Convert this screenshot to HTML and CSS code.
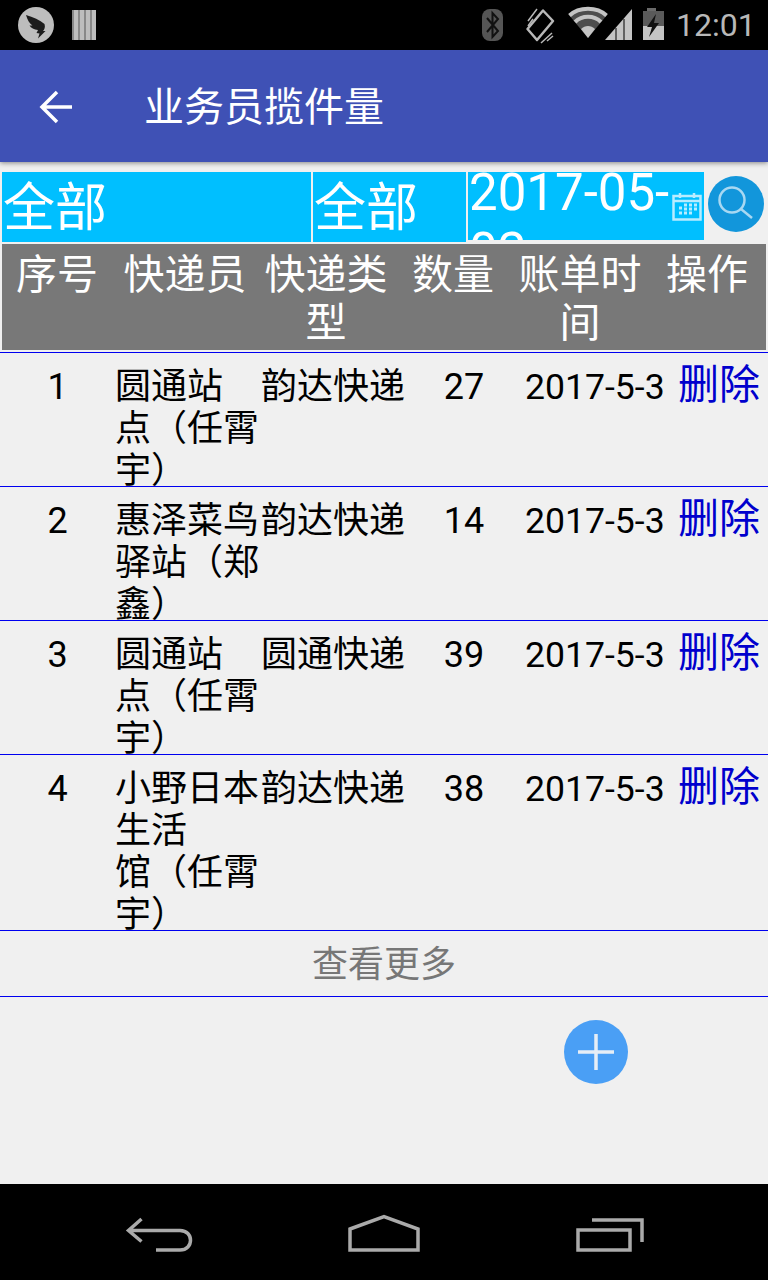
FILE: index.html
```html
<!DOCTYPE html>
<html lang="zh">
<head>
    <meta charset="UTF-8">
    <meta name="viewport" content="width=device-width, initial-scale=1.0">
    <title>业务员揽件量</title>
    <link rel="stylesheet" href="styles.css">
</head>
<body>

<div class="status-bar">
    <svg class="status-left" width="90" height="50" viewBox="0 0 90 50">
        <circle cx="26" cy="25" r="18" fill="#bdbdbd"/>
        <path d="M16 15 C23 17 30 20 34.500 24 C35.500 27 34.500 29.500 33 31 L35.500 31 L28 38.500 L29.500 33.500 L26.500 33 L28 30 C24 29.500 21 28 19.500 25.500 L22.500 25.500 C19.500 23.500 17.500 20 16 15 Z" fill="#1c1c1c"/>
        <rect x="62" y="10" width="24" height="30" fill="#bdbdbd"/>
        <path d="M63 10 V40 M69 10 V40 M75 10 V40 M81 10 V40" stroke="#777" stroke-width="1.500"/>
    </svg>
    <svg class="status-right" width="185" height="50" viewBox="0 0 185 50">
        <rect x="1" y="9" width="21" height="32" rx="8" fill="#555"/>
        <path d="M6 18 L17 31 L11.500 37 V13 L17 19 L6 32" fill="none" stroke="#111" stroke-width="2"/>
        <path d="M62 10.500 L72 21 L56 40 L46.500 29 Z" fill="none" stroke="#b8b8b8" stroke-width="2.500" stroke-linejoin="round"/>
        <path d="M47 21 L56 9 M47 26 L52 19 M60 43 L71 33 M66 41 L72 36" stroke="#b8b8b8" stroke-width="1.500" fill="none"/>
        <path d="M88 15 C97 6 115 6 126 15 L107 38 Z" fill="#4e4e4e"/>
        <path d="M88.500 15.500 C98 6.500 116 6.500 125.500 15.500" fill="none" stroke="#c4c4c4" stroke-width="4"/>
        <path d="M94 22 C101 15 113 15 120 22" fill="none" stroke="#c4c4c4" stroke-width="4"/>
        <path d="M100 29 L107 38 L114 29 C110 25 104 25 100 29 Z" fill="#c4c4c4"/>
        <path d="M124 40 L151 9 V40 Z" fill="#c4c4c4"/>
        <path d="M135 40 V28 M143 40 V19" stroke="#000" stroke-width="1"/>
        <rect x="166" y="8" width="9" height="3" fill="#6a6a6a"/>
        <rect x="162" y="11" width="21" height="29" fill="#5a5a5a"/>
        <rect x="162" y="26" width="21" height="14" fill="#c4c4c4"/>
        <path d="M175 14 L166 27 H171 L168 37 L178 23 H173 Z" fill="#111"/>
    </svg>
    <span class="status-time">12:01</span>
</div>

<header class="app-bar">
    <svg class="back-arrow" width="40" height="40" viewBox="0 0 40 40">
        <path d="M35 20 H5 M20 5 L5 20 L20 35" fill="none" stroke="#fff" stroke-width="3.500"/>
    </svg>
    <h1>业务员揽件量</h1>
</header>

<main class="content">
    <div class="filter-row">
        <div class="filter-cell filter-courier">全部</div>
        <div class="filter-cell filter-type">全部</div>
        <div class="filter-date">
            <span class="date-text">2017-05-02</span>
            <svg class="date-icon" width="30" height="30" viewBox="0 0 30 30">
                <path d="M1.500 5 H28.500 V28.500 H1.500 Z M1.500 10 H28.500" fill="none" stroke="#b8ecff" stroke-width="2.500"/>
                <path d="M8 2 V7 M22 2 V7" stroke="#b8ecff" stroke-width="2.500"/>
                <path d="M7 17 H10 M12 14 H15 M12 18 H15 M12 22 H15 M17 14 H20 M17 18 H20 M17 22 H20 M7 22 H10 M22 14 H25 M22 18 H25" stroke="#b8ecff" stroke-width="3"/>
            </svg>
        </div>
        <button class="search-btn" type="button" aria-label="搜索">
            <svg width="56" height="56" viewBox="0 0 56 56">
                <circle cx="28" cy="28" r="28" fill="#1296db"/>
                <circle cx="24" cy="24" r="12.500" fill="none" stroke="#a8d8f2" stroke-width="2.500"/>
                <path d="M33 33 L44 42" stroke="#a8d8f2" stroke-width="2.500"/>
            </svg>
        </button>
    </div>

    <div class="table-head">
        <div>序号</div>
        <div>快递员</div>
        <div>快递类型</div>
        <div>数量</div>
        <div>账单时间</div>
        <div>操作</div>
    </div>

    <div class="row">
        <div class="cell-center">1</div>
        <div class="cell-name">圆通站<br>点（任霄<br>宇）</div>
        <div class="cell-type">韵达快递</div>
        <div class="cell-center">27</div>
        <div class="cell-date">2017-5-3</div>
        <a class="cell-del">删除</a>
    </div>
    <div class="row">
        <div class="cell-center">2</div>
        <div class="cell-name">惠泽菜鸟<br>驿站（郑<br>鑫）</div>
        <div class="cell-type">韵达快递</div>
        <div class="cell-center">14</div>
        <div class="cell-date">2017-5-3</div>
        <a class="cell-del">删除</a>
    </div>
    <div class="row">
        <div class="cell-center">3</div>
        <div class="cell-name">圆通站<br>点（任霄<br>宇）</div>
        <div class="cell-type">圆通快递</div>
        <div class="cell-center">39</div>
        <div class="cell-date">2017-5-3</div>
        <a class="cell-del">删除</a>
    </div>
    <div class="row">
        <div class="cell-center">4</div>
        <div class="cell-name">小野日本<br>生活<br>馆（任霄<br>宇）</div>
        <div class="cell-type">韵达快递</div>
        <div class="cell-center">38</div>
        <div class="cell-date">2017-5-3</div>
        <a class="cell-del">删除</a>
    </div>

    <div class="more">查看更多</div>

    <button class="fab" type="button" aria-label="添加">
        <svg width="64" height="64" viewBox="0 0 64 64">
            <circle cx="32" cy="32" r="32" fill="#4a9ff5"/>
            <path d="M14 32 H50 M32 14 V50" stroke="#e6eef6" stroke-width="3.500"/>
        </svg>
    </button>
</main>

<nav class="nav-bar">
    <svg width="70" height="44" viewBox="124 1214 70 44">
        <path d="M141.500 1219 L128.500 1230.500 L141.500 1241.500 M128.500 1230.500 H180 C194 1230.500 194 1250 180 1250 H156" fill="none" stroke="#aaa" stroke-width="3.500"/>
    </svg>
    <svg width="76" height="44" viewBox="346 1214 76 44">
        <path d="M350 1229 L384 1216.500 L418 1229 V1250 H350 Z" fill="none" stroke="#aaa" stroke-width="3.500"/>
    </svg>
    <svg width="72" height="44" viewBox="574 1214 72 44">
        <path d="M578 1230 H630 V1250 H578 Z M592 1220 H642 V1242" fill="none" stroke="#aaa" stroke-width="3.500"/>
    </svg>
</nav>

</body>
</html>
```

FILE: styles.css
```css
* {
    box-sizing: border-box;
}

html, body {
    height: 100%;
}

body {
    margin: 0;
    display: flex;
    flex-direction: column;
    height: 1280px;
    overflow: hidden;
    background-color: #f0f0f0;
    color: #000;
    font-family: Roboto, "Noto Sans CJK SC", sans-serif;
}

button {
    padding: 0;
    border: none;
    background: none;
}

svg {
    display: block;
}

/* status bar */
.status-bar {
    display: flex;
    align-items: center;
    flex: none;
    height: 50px;
    background-color: #000;
}

.status-left {
    margin-left: 10px;
}

.status-right {
    margin-left: 381px;
}

.status-time {
    margin-left: 10px;
    color: #b8b8b8;
    font-size: 32px;
    line-height: 50px;
}

/* app bar */
.app-bar {
    display: flex;
    align-items: center;
    flex: none;
    height: 112px;
    padding-left: 37px;
    background-color: #3f51b5;
    box-shadow: 0 1px 5px rgba(0, 0, 0, 0.45);
    position: relative;
}

.back-arrow {
    margin-top: 1px;
}

.app-bar h1 {
    margin: 4px 0 0 67px;
    color: #fff;
    font-size: 40px;
    font-weight: 400;
    line-height: 104px;
}

/* filters */
.content {
    flex: 1;
    padding-top: 10px;
}

.filter-row {
    display: flex;
    gap: 2px;
    height: 70px;
    padding-left: 2px;
}

.filter-cell {
    padding-left: 1px;
    overflow: hidden;
    background-color: #00bfff;
    color: #fff;
    font-size: 52px;
    line-height: 74px;
}

.filter-courier {
    width: 309px;
}

.filter-type {
    width: 153px;
}

.filter-date {
    display: flex;
    align-items: flex-start;
    width: 236px;
    height: 68px;
    padding-left: 1px;
    overflow: hidden;
    background-color: #00bfff;
    color: #fff;
    font-size: 51px;
    line-height: 59px;
}

.date-text {
    width: 203px;
    margin-top: -9px;
}

.date-icon {
    flex: none;
    margin-top: 19px;
}

.search-btn {
    flex: none;
    width: 56px;
    height: 56px;
    margin: 4px 0 0 2px;
}

/* table */
.table-head {
    display: grid;
    grid-template-columns: 110px 146px 136px 118px 136px 118px;
    width: 764px;
    height: 106px;
    margin: 2px 0 2px 2px;
    padding-top: 7px;
    background-color: #787878;
    color: #fff;
    font-size: 41px;
    line-height: 48px;
    text-align: center;
}

.row {
    display: grid;
    grid-template-columns: 115px 146px 142px 122px 152px 91px;
    align-items: start;
    padding-top: 13px;
    border-top: 1px solid #0000f0;
    font-size: 36px;
    line-height: 42px;
}

.cell-center {
    text-align: center;
}

.cell-name {
    margin-bottom: -6px;
}

.cell-type {
    white-space: nowrap;
}

.cell-date {
    font-size: 35.600px;
}

.cell-del {
    margin: -2px 0 0 1px;
    color: #0000cd;
    font-size: 41px;
}

.more {
    height: 67px;
    border-top: 1px solid #0000f0;
    border-bottom: 1px solid #0000f0;
    color: #777;
    font-size: 36px;
    line-height: 69px;
    text-align: center;
}

.fab {
    display: block;
    width: 64px;
    height: 64px;
    margin: 23px 0 0 564px;
}

/* bottom navigation */
.nav-bar {
    display: flex;
    align-items: flex-start;
    justify-content: space-between;
    flex: none;
    height: 96px;
    padding: 30px 122px 0 124px;
    background-color: #000;
}
```
